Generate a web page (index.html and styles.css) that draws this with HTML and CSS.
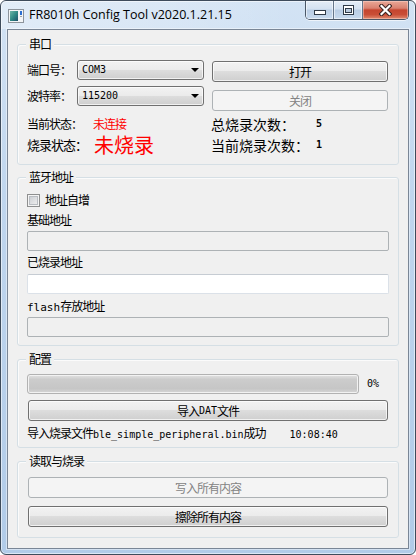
FILE: index.html
```html
<!DOCTYPE html>
<html lang="zh-CN">
<head>
<meta charset="utf-8">
<title>FR8010h Config Tool</title>
<link rel="stylesheet" href="styles.css">
</head>
<body>
<div class="window">
  <div class="titlebar">
    <svg class="app-icon" width="16" height="16" viewBox="0 0 16 16">
      <defs>
        <linearGradient id="ig" x1="0" y1="0" x2="1" y2="1">
          <stop offset="0" stop-color="#6fb7a8"/>
          <stop offset="0.5" stop-color="#2f8b86"/>
          <stop offset="1" stop-color="#1d4f6a"/>
        </linearGradient>
      </defs>
      <rect x="0.5" y="1.5" width="15" height="13" fill="#f3f5f7" stroke="#8d949c"/>
      <rect x="2" y="3" width="8" height="10" fill="url(#ig)"/>
      <rect x="12" y="3" width="2" height="4" fill="#2d6fd0"/>
      <rect x="12" y="8" width="2" height="1" fill="#9aa3ad"/>
    </svg>
    <span class="caption">FR8010h Config Tool v2020.1.21.15</span>
    <div class="controls">
      <div class="cbtn cmin">
        <svg width="12" height="5" viewBox="0 0 12 5"><rect x="0.5" y="0.5" width="11" height="4" fill="#fff" stroke="#2f3a47"/></svg>
      </div>
      <div class="cbtn cmax">
        <svg width="11" height="10" viewBox="0 0 11 10"><rect x="0.5" y="0.5" width="10" height="9" fill="#fff" stroke="#2f3a47"/><rect x="2.5" y="3.5" width="6" height="4" fill="#b9c9dc" stroke="#2f3a47"/></svg>
      </div>
      <div class="cbtn cclose">
        <svg width="13" height="12" viewBox="0 0 13 12"><path d="M2.5 2 L10.5 10 M10.5 2 L2.5 10" stroke="#3a2320" stroke-width="4.2" stroke-linecap="square"/><path d="M2.5 2 L10.5 10 M10.5 2 L2.5 10" stroke="#fff" stroke-width="2.2" stroke-linecap="square"/></svg>
      </div>
    </div>
  </div>

  <div class="client">
    <section class="group g-serial">
      <span class="group-title">串口</span>
      <div class="serial-grid">
        <div class="field r1">
          <span class="flabel">端口号：</span>
          <div class="combo"><span class="mono">COM3</span><i class="arrow"></i></div>
        </div>
        <button class="btn b-open">打开</button>
        <div class="field r2">
          <span class="flabel">波特率：</span>
          <div class="combo"><span class="mono">115200</span><i class="arrow"></i></div>
        </div>
        <button class="btn b-shut" disabled>关闭</button>
        <div class="stat">
          <span class="slabel">当前状态：</span><span class="red">未连接</span>
        </div>
        <div class="stat">
          <span class="rlabel">总烧录次数：</span><span class="mono num">5</span>
        </div>
        <div class="stat">
          <span class="slabel burn">烧录状态：</span><span class="red huge">未烧录</span>
        </div>
        <div class="stat">
          <span class="rlabel">当前烧录次数：</span><span class="mono num">1</span>
        </div>
      </div>
    </section>

    <section class="group g-bt">
      <span class="group-title">蓝牙地址</span>
      <div class="check"><span class="box"></span><span>地址自增</span></div>
      <div class="lbl l1">基础地址</div>
      <div class="input disabled i1"></div>
      <div class="lbl l2">已烧录地址</div>
      <div class="input i2"></div>
      <div class="lbl l3"><span class="mono flash">flash</span>存放地址</div>
      <div class="input disabled i3"></div>
    </section>

    <section class="group g-cfg">
      <span class="group-title">配置</span>
      <div class="progress-row">
        <div class="progress"></div>
        <span class="mono pct">0%</span>
      </div>
      <button class="btn wide b-import">导入<span class="mono">DAT</span>文件</button>
      <div class="log">导入烧录文件<span class="mono">ble_simple_peripheral.bin</span>成功<span class="mono time">10:08:40</span></div>
    </section>

    <section class="group g-burn">
      <span class="group-title">读取与烧录</span>
      <button class="btn wide" disabled>写入所有内容</button>
      <button class="btn wide b-erase">擦除所有内容</button>
    </section>
  </div>
</div>
</body>
</html>
```

FILE: styles.css
```css
* { box-sizing: border-box; }
html, body { margin: 0; padding: 0; }
body {
  width: 416px;
  height: 555px;
  overflow: hidden;
  background: #ffffff;
  font-family: "Noto Sans CJK SC", "Noto Sans", sans-serif;
  font-size: 12px;
  line-height: 14px;
  letter-spacing: -1px;
  color: #000;
}

.window {
  width: 416px;
  height: 555px;
  border: 1px solid #3e4b5b;
  border-radius: 6px;
  background: linear-gradient(180deg, #d3e3f4 0%, #c0d6ee 35%, #b1cbe8 100%);
  box-shadow: inset 0 0 0 1px rgba(255,255,255,0.55);
  display: flex;
  flex-direction: column;
  overflow: hidden;
}

/* ---------- title bar ---------- */
.titlebar {
  height: 28px;
  flex: none;
  display: flex;
  align-items: flex-start;
  padding: 0 6px 0 7px;
  background: linear-gradient(90deg, rgba(255,255,255,0.35) 0%, rgba(255,255,255,0.15) 45%, rgba(255,255,255,0) 70%);
}
.app-icon { flex: none; margin-top: 7px; }
.caption {
  margin-left: 5px;
  margin-top: 5px;
  font-family: "Open Sans", "Noto Sans", sans-serif;
  font-size: 12.5px;
  line-height: 18px;
  letter-spacing: 0;
  color: #000;
  white-space: nowrap;
}
.controls {
  margin-left: auto;
  display: flex;
  height: 19px;
  border: 1px solid #4a5767;
  border-top: none;
  border-radius: 0 0 5px 5px;
  overflow: hidden;
  box-shadow: 0 1px 0 rgba(255,255,255,0.6);
}
.cbtn {
  height: 100%;
  display: flex;
  align-items: center;
  justify-content: center;
}
.cmin, .cmax {
  background: linear-gradient(180deg, #e4edf7 0%, #d3e1f1 45%, #b9cde4 50%, #c8daee 100%);
  border-right: 1px solid #66768a;
  box-shadow: inset 0 0 0 1px rgba(255,255,255,0.55);
}
.cmin { width: 28px; align-items: flex-end; padding-bottom: 4px; }
.cmax { width: 29px; }
.cclose {
  width: 45px;
  background: linear-gradient(180deg, #e9a897 0%, #d98170 40%, #c5452f 50%, #c94e36 75%, #e08a6f 100%);
  box-shadow: inset 0 0 0 1px rgba(255,220,210,0.45);
}

/* ---------- client area ---------- */
.client {
  height: 520px;
  flex: none;
  margin: 0 6px;
  border: 1px solid #7a8696;
  background: #f0f0f0;
  box-shadow: 0 0 0 1px rgba(255,255,255,0.45);
  display: flex;
  flex-direction: column;
}

.group {
  position: relative;
  margin: 0 9px;
  border: 1px solid #d5dfe5;
  border-radius: 3px;
  box-shadow: inset 1px 1px 0 #fbfbfb;
  display: flex;
  flex-direction: column;
  padding: 0 9px;
}
.group-title {
  position: absolute;
  top: -8px;
  left: 8px;
  padding: 0 3px;
  background: #f0f0f0;
  line-height: 14px;
  white-space: nowrap;
}

.g-serial { margin-top: 14px; height: 121px; padding: 15px 10px 0 9px; }
.g-bt { margin-top: 12px; height: 169px; padding-top: 15px; }
.g-cfg { margin-top: 13px; height: 89px; padding-top: 14px; }
.g-burn { margin-top: 13px; height: 77px; padding-top: 15px; }

.mono {
  font-family: "DejaVu Sans Mono", "Liberation Mono", monospace;
  font-size: 10px;
  letter-spacing: 0;
}

/* ---------- serial group ---------- */
.serial-grid {
  display: grid;
  grid-template-columns: 177px 177px;
  grid-template-rows: 22px 29px 23px 21px;
  column-gap: 7px;
}
.field { display: flex; align-items: center; height: 20px; }
.field.r2 { margin-top: 4px; }
.flabel { width: 50px; flex: none; white-space: nowrap; }
.combo {
  width: 127px;
  height: 20px;
  display: flex;
  align-items: center;
  padding: 0 4px 0 4px;
  border: 1px solid #707070;
  border-radius: 3px;
  background: linear-gradient(180deg, #f2f2f2 0%, #ebebeb 49%, #dddddd 50%, #cfcfcf 100%);
  box-shadow: inset 0 0 0 1px rgba(255,255,255,0.7);
}
.arrow {
  margin-left: auto;
  width: 0;
  height: 0;
  border-left: 4px solid transparent;
  border-right: 4px solid transparent;
  border-top: 4px solid #000;
}

.btn {
  display: flex;
  align-items: center;
  justify-content: center;
  height: 21px;
  padding: 0;
  margin: 0;
  font: inherit;
  letter-spacing: inherit;
  color: #000;
  border: 1px solid #707070;
  border-radius: 3px;
  background: linear-gradient(180deg, #f2f2f2 0%, #ebebeb 49%, #dddddd 50%, #cfcfcf 100%);
  box-shadow: inset 0 0 0 1px rgba(255,255,255,0.7);
}
.btn:disabled {
  color: #838383;
  border-color: #adb2b5;
  background: #f4f4f4;
  box-shadow: none;
}
.b-open { width: 176px; margin: 1px 0 0 1px; }
.b-shut { width: 176px; margin: 8px 0 0 1px; }

.stat {
  display: flex;
  align-items: center;
  height: 20px;
  align-self: end;
  white-space: nowrap;
}
.slabel { width: 66px; flex: none; }
.slabel.burn { font-size: 13px; letter-spacing: -1px; }
.rlabel { width: 105px; flex: none; font-size: 14px; letter-spacing: 0; }
.red { color: #ff0000; }
.huge { font-size: 20px; line-height: 20px; letter-spacing: 0; margin-left: 1px; }
.num { font-weight: bold; }

/* ---------- bluetooth group ---------- */
.check { display: flex; align-items: center; height: 14px; }
.box {
  width: 13px;
  height: 13px;
  margin-right: 5px;
  border: 1px solid #8e8f8f;
  background: linear-gradient(135deg, #c3c7cc 0%, #e2e3e5 60%, #f3f3f3 100%);
  box-shadow: inset 0 0 0 1px #f4f4f4, inset 0 0 0 2px #b9bdc2;
}
.lbl { height: 14px; white-space: nowrap; }
.l1 { margin-top: 6px; }
.l2 { margin-top: 4px; }
.l3 { margin-top: 5px; }
.flash { font-size: 11px; }
.input {
  height: 20px;
  border: 1px solid #dbe1e8;
  border-top-color: #c6ccd3;
  border-radius: 2px;
  background: #ffffff;
}
.input.disabled {
  border: 1px solid #adb2b5;
  background: #f0f0f0;
}
.i1 { margin-top: 4px; }
.i2 { margin-top: 5px; }
.i3 { margin-top: 4px; }

/* ---------- config group ---------- */
.progress-row { display: flex; align-items: center; height: 20px; }
.progress {
  width: 332px;
  height: 20px;
  border: 1px solid #b2b2b2;
  border-radius: 3px;
  background: linear-gradient(180deg, #e2e2e2 0%, #cccccc 25%, #c6c6c6 75%, #d6d6d6 100%);
  box-shadow: inset 0 0 0 1px #f2f2f2;
}
.pct { margin-left: 8px; }
.wide { width: 360px; margin: 0 1px; }
.b-import { margin-top: 6px; }
.log { margin-top: 5px; height: 14px; white-space: nowrap; }
.time { margin-left: 24px; }

/* ---------- burn group ---------- */
.b-erase { margin-top: 8px; }
```
